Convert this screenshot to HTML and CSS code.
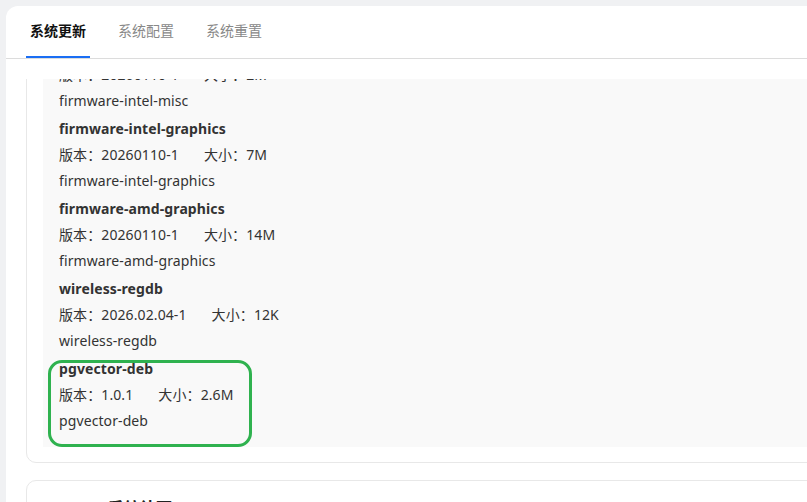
FILE: index.html
```html
<!DOCTYPE html>
<html lang="zh-CN">
<head>
    <meta charset="UTF-8">
    <meta name="viewport" content="width=device-width, initial-scale=1.0">
    <title>系统更新</title>
    <link rel="stylesheet" href="styles.css">
</head>
<body>

<div class="panel">
    <div class="tabs">
        <div class="tab active">系统更新</div>
        <div class="tab">系统配置</div>
        <div class="tab">系统重置</div>
    </div>

    <div class="scroll">
        <div class="scroll-inner">
            <div class="card">
                <div class="pkg-list">
                    <div class="pkg">
                        <div class="pkg-name">firmware-intel-misc</div>
                        <div class="pkg-meta"><span class="ver">版本：20260110-1</span><span>大小：2M</span></div>
                        <div class="pkg-desc">firmware-intel-misc</div>
                    </div>
                    <div class="pkg">
                        <div class="pkg-name">firmware-intel-graphics</div>
                        <div class="pkg-meta"><span class="ver">版本：20260110-1</span><span>大小：7M</span></div>
                        <div class="pkg-desc">firmware-intel-graphics</div>
                    </div>
                    <div class="pkg">
                        <div class="pkg-name">firmware-amd-graphics</div>
                        <div class="pkg-meta"><span class="ver">版本：20260110-1</span><span>大小：14M</span></div>
                        <div class="pkg-desc">firmware-amd-graphics</div>
                    </div>
                    <div class="pkg">
                        <div class="pkg-name">wireless-regdb</div>
                        <div class="pkg-meta"><span class="ver">版本：2026.02.04-1</span><span>大小：12K</span></div>
                        <div class="pkg-desc">wireless-regdb</div>
                    </div>
                    <div class="pkg highlight">
                        <div class="pkg-name">pgvector-deb</div>
                        <div class="pkg-meta"><span class="ver">版本：1.0.1</span><span>大小：2.6M</span></div>
                        <div class="pkg-desc">pgvector-deb</div>
                        <div class="mark"></div>
                    </div>
                </div>
            </div>

            <div class="card">
                <div class="card-title">系统补丁</div>
            </div>
        </div>
    </div>
</div>

</body>
</html>
```

FILE: styles.css
```css
html, body {
    height: 100%;
}
body {
    font-family: "Noto Sans", "Noto Sans CJK SC", sans-serif;
    background-color: #f0f1f3;
    margin: 0;
    padding: 6px 0 0 6px;
    box-sizing: border-box;
    overflow: hidden;
    color: #333;
}
.panel {
    width: 1100px;
    height: 100%;
    background: #fff;
    border-radius: 12px 0 0 0;
    display: flex;
    flex-direction: column;
}
.tabs {
    display: flex;
    gap: 24px;
    padding: 0 20px;
    height: 52px;
    border-bottom: 1px solid #dcdcdc;
}
.tab {
    padding: 0 4px;
    font-size: 14px;
    line-height: 50px;
    color: #888;
    border-bottom: 2px solid transparent;
}
.tab.active {
    color: #111;
    font-weight: 600;
    border-bottom-color: #1a6ef4;
}
.scroll {
    flex: 1;
    margin-top: 20px;
    padding: 0 20px;
    overflow: hidden;
}
.scroll-inner {
    margin-top: -72px;
    display: flex;
    flex-direction: column;
    gap: 17px;
}
.card {
    border: 1px solid #e8e8e8;
    border-radius: 10px;
    padding: 16px 16px 15px;
}
.pkg-list {
    background: #f9f9f9;
    padding: 12px 16px 11px;
}
.pkg {
    position: relative;
    font-size: 14px;
    line-height: 26px;
    margin-bottom: 2px;
    letter-spacing: 0.1px;
}
.pkg-name {
    font-weight: 700;
}
.ver {
    margin-right: 25px;
}
.mark {
    position: absolute;
    left: -11px;
    top: 4px;
    width: 204px;
    height: 87px;
    box-sizing: border-box;
    border: 3px solid #2fb24f;
    border-radius: 14px;
}
.card-title {
    font-size: 16px;
    font-weight: 700;
    line-height: 22px;
    padding-left: 65px;
    color: #222;
}
```
